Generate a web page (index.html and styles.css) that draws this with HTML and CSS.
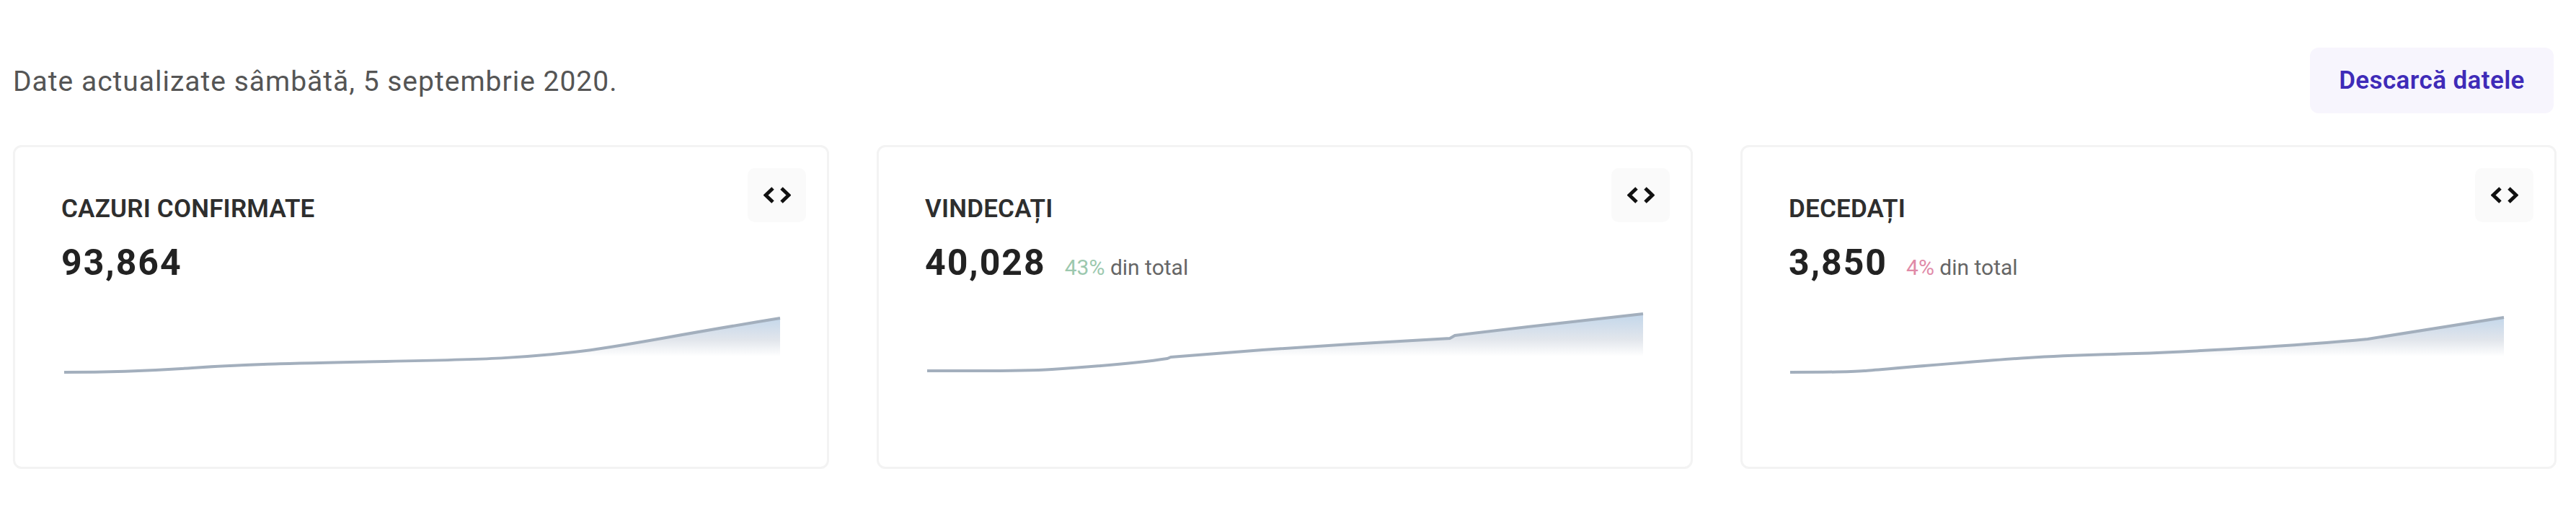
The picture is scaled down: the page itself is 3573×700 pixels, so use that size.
FILE: index.html
```html
<!DOCTYPE html>
<html lang="ro">
<head>
  <meta charset="UTF-8">
  <title>Date actualizate</title>
  <link rel="stylesheet" href="styles.css">
</head>
<body>
  <div class="container">
    <div class="top-row">
      <p class="updated">Date actualizate sâmbătă, 5 septembrie 2020.</p>
      <button class="download">Descarcă datele</button>
    </div>

    <div class="cards">
      <div class="card">
        <div class="card-head">
          <div class="card-info">
            <h2 class="card-title">CAZURI CONFIRMATE</h2>
            <div class="card-values"><span class="card-number">93,864</span></div>
          </div>
          <button class="embed">
            <svg class="embed-icon" viewBox="0 0 38 23"><path d="M13 2 3 11.5 13 21M25 2l10 9.5L25 21"/></svg>
          </button>
        </div>
        <svg class="chart" viewBox="0 0 1000 100">
          <defs>
            <linearGradient id="fade1" gradientUnits="userSpaceOnUse" x1="0" y1="8" x2="0" y2="64">
              <stop offset="0" stop-color="#c2d6ea"/>
              <stop offset="0.6" stop-color="#e2e6ec"/>
              <stop offset="1" stop-color="#fff"/>
            </linearGradient>
          </defs>
          <path fill="url(#fade1)" d="M4 86C60 86 110 85 182 80S300 74 450 71 640 66 711 58 830 38 997 11V86Z"/>
          <path class="chart-line" d="M4 86C60 86 110 85 182 80S300 74 450 71 640 66 711 58 830 38 997 11"/>
        </svg>
      </div>

      <div class="card">
        <div class="card-head">
          <div class="card-info">
            <h2 class="card-title">VINDECAȚI</h2>
            <div class="card-values">
              <span class="card-number">40,028</span>
              <span class="card-note"><span class="pct-green">43%</span> din total</span>
            </div>
          </div>
          <button class="embed">
            <svg class="embed-icon" viewBox="0 0 38 23"><path d="M13 2 3 11.5 13 21M25 2l10 9.5L25 21"/></svg>
          </button>
        </div>
        <svg class="chart" viewBox="0 0 1000 100">
          <defs>
            <linearGradient id="fade2" gradientUnits="userSpaceOnUse" x1="0" y1="5" x2="0" y2="64">
              <stop offset="0" stop-color="#c2d6ea"/>
              <stop offset="0.6" stop-color="#e2e6ec"/>
              <stop offset="1" stop-color="#fff"/>
            </linearGradient>
          </defs>
          <path fill="url(#fade2)" d="M3 84C90 84 130 85 176 82S290 74 336 67L341 65 468 55 590 47 728 39 735 35 836 23 996 5V84Z"/>
          <path class="chart-line" d="M3 84C90 84 130 85 176 82S290 74 336 67L341 65 468 55 590 47 728 39 735 35 836 23 996 5"/>
        </svg>
      </div>

      <div class="card">
        <div class="card-head">
          <div class="card-info">
            <h2 class="card-title">DECEDAȚI</h2>
            <div class="card-values">
              <span class="card-number">3,850</span>
              <span class="card-note"><span class="pct-red">4%</span> din total</span>
            </div>
          </div>
          <button class="embed">
            <svg class="embed-icon" viewBox="0 0 38 23"><path d="M13 2 3 11.5 13 21M25 2l10 9.5L25 21"/></svg>
          </button>
        </div>
        <svg class="chart" viewBox="0 0 1000 100">
          <defs>
            <linearGradient id="fade3" gradientUnits="userSpaceOnUse" x1="0" y1="8" x2="0" y2="64">
              <stop offset="0" stop-color="#c2d6ea"/>
              <stop offset="0.6" stop-color="#e2e6ec"/>
              <stop offset="1" stop-color="#fff"/>
            </linearGradient>
          </defs>
          <path fill="url(#fade3)" d="M2 86C50 86 80 86 105 84S270 70 331 66 420 62 481 60 700 50 803 40C830 36 900 25 992 10V86Z"/>
          <path class="chart-line" d="M2 86C50 86 80 86 105 84S270 70 331 66 420 62 481 60 700 50 803 40C830 36 900 25 992 10"/>
        </svg>
      </div>
    </div>
  </div>
</body>
</html>
```

FILE: styles.css
```css
body { margin: 0; background-color: #fff; font-family: Roboto, "Noto Sans", sans-serif; color: #2b2b2b; }
.container { padding: 66px 27px 0 18px; }

.top-row { display: flex; justify-content: space-between; align-items: center; height: 91px; margin-bottom: 44px; }
.updated { margin: 0; padding-top: 3px; font-size: 39px; color: #555; letter-spacing: 1px; }
.download { width: 338px; height: 91px; margin-right: 4px; background-color: #f7f5fd; color: #3f2bb8; border: none; border-radius: 12px; font-family: inherit; font-size: 35px; font-weight: 600; letter-spacing: 0.4px; cursor: pointer; }

.cards { display: grid; grid-template-columns: repeat(3, 1fr); gap: 66px; }
.card { height: 449px; box-sizing: border-box; padding: 29px 29px 0 64px; background-color: #fff; border: 3px solid #f3f3f3; border-radius: 12px; }
.card-head { display: flex; justify-content: space-between; align-items: flex-start; }
.card-info { padding-top: 35px; }
.card-title { margin: 0 0 22px; font-size: 35px; line-height: 44px; font-weight: 600; color: #2e2e2e; letter-spacing: 0.2px; }
.card-values { display: flex; align-items: baseline; gap: 26px; height: 60px; line-height: 60px; }
.card-number { font-size: 50px; font-weight: 700; color: #222; letter-spacing: 2px; }
.card-note { font-size: 30px; color: #666; }
.pct-green { color: #9cc8ae; }
.pct-red { color: #e08aa8; }

.embed { display: flex; align-items: center; justify-content: center; width: 81px; height: 75px; padding: 0; background-color: #fafafa; border: none; border-radius: 10px; cursor: pointer; }
.embed-icon { width: 38px; height: 23px; fill: none; stroke: #111; stroke-width: 5; }

.chart { display: block; width: 1000px; height: 100px; margin-top: 36px; }
.chart-line { fill: none; stroke: #a3afbd; stroke-width: 4; }
```
